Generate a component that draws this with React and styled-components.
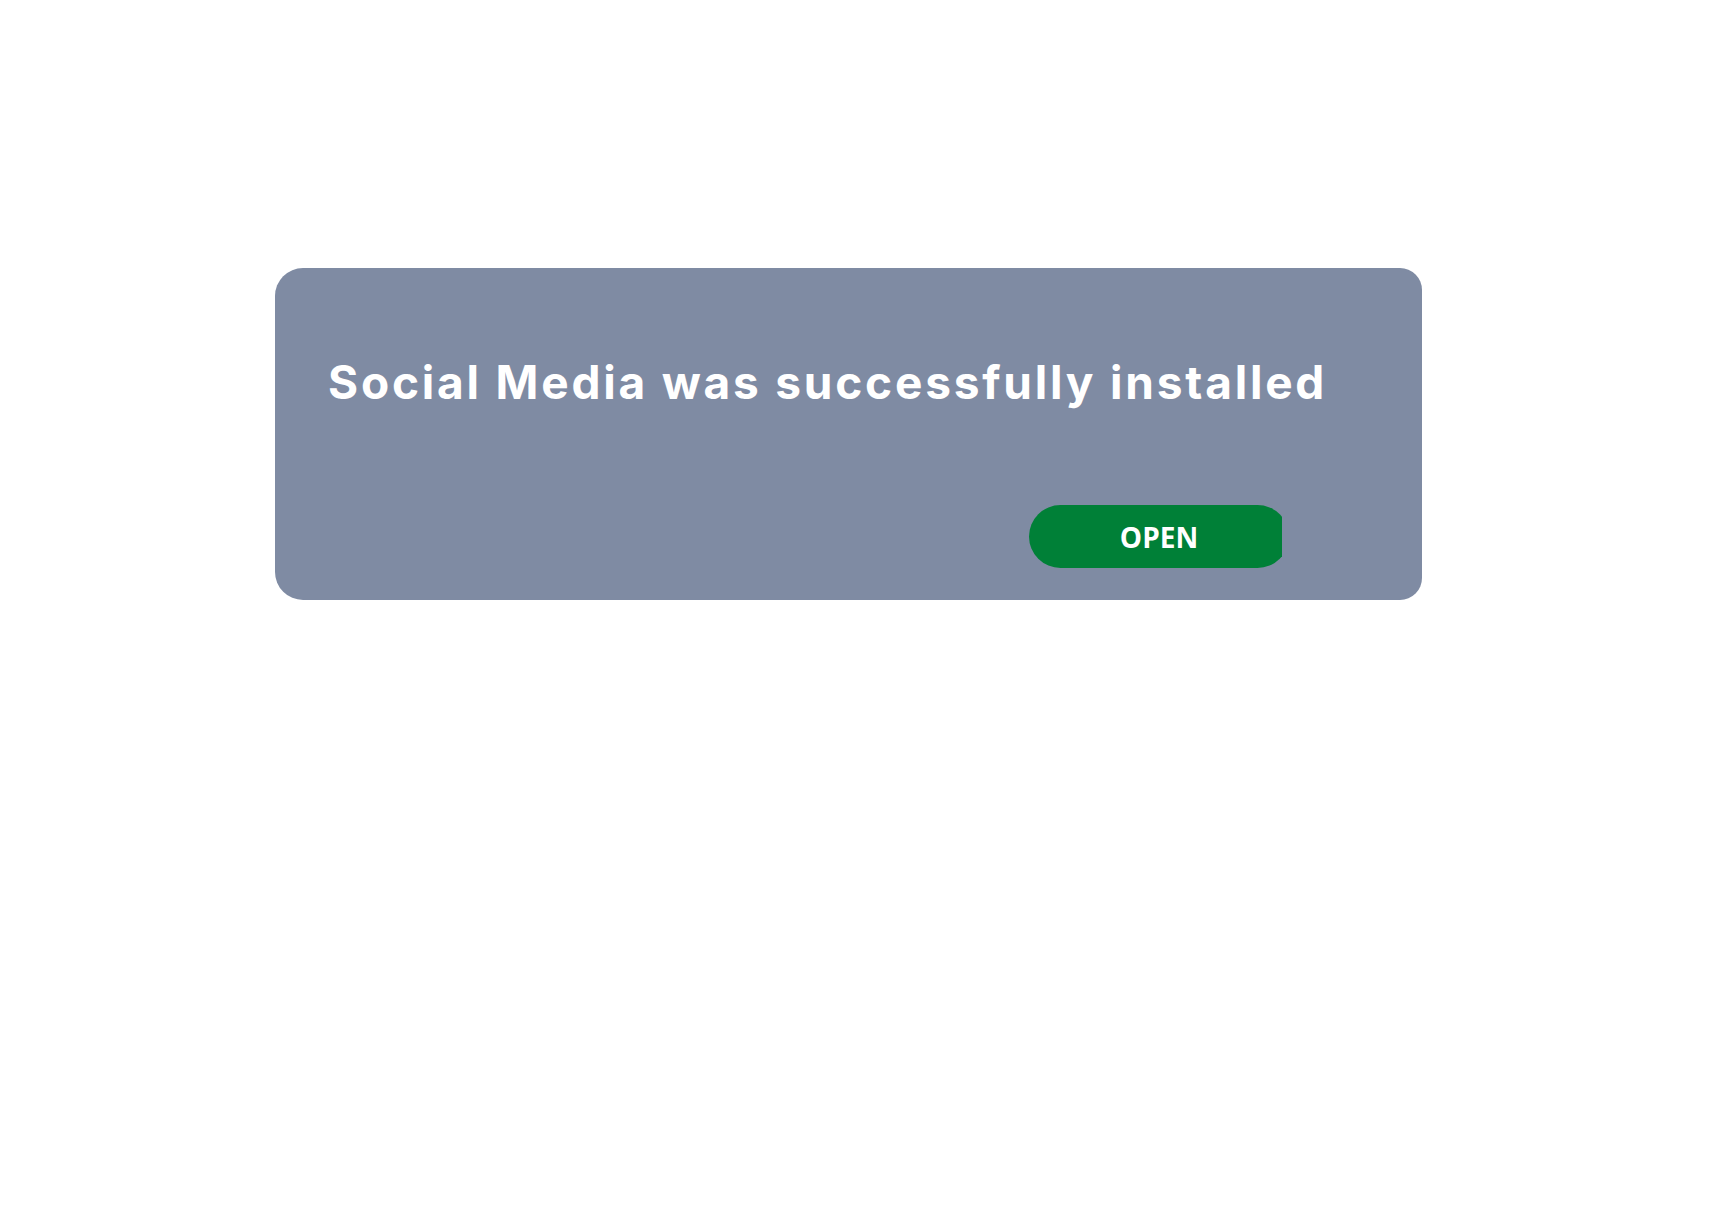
import React from 'react'
import styled, { createGlobalStyle } from "styled-components";

const GlobalStyle = createGlobalStyle`
  body{
    margin:0;
    background:#ffffff;
    font-family:"Inter","Liberation Sans",sans-serif;
  }
`

const Page = styled.div`
  min-height:100vh;
  padding:268px 0 0 275px;
  box-sizing:border-box;
`
const Card = styled.div`
  width:1147px;
  height:332px;
  box-sizing:border-box;
  background:#7f8ba3;
  border-radius:28px 22px 22px 28px;
  display:flex;
  flex-direction:column;
  padding:92px 0 0 53px;
`
const Title = styled.h1`
  margin:0;
  font-family:"Inter","Liberation Sans",sans-serif;
  font-size:46px;
  line-height:44px;
  font-weight:700;
  letter-spacing:2.8px;
  color:#ffffff;
`
const Actions = styled.div`
  display:flex;
  justify-content:flex-end;
  margin-top:101px;
  padding-right:140px;
`
const ButtonClip = styled.div`
  width:253px;
  overflow:hidden;
`
const Button = styled.button`
  width:260px;
  height:63px;
  border:none;
  border-radius:32px;
  background:#008037;
  color:#ffffff;
  font-family:"Open Sans","Noto Sans",sans-serif;
  font-size:28px;
  font-weight:700;
  cursor:pointer;
  padding:0;
`

const App = () => {
    return (
        <Page>
          <GlobalStyle/>
          <Card>
            <Title>Social Media was successfully installed</Title>
            <Actions>
                <ButtonClip>
                    <Button>OPEN</Button>
                </ButtonClip>
            </Actions>
          </Card>
        </Page>
    )
}

export default App
